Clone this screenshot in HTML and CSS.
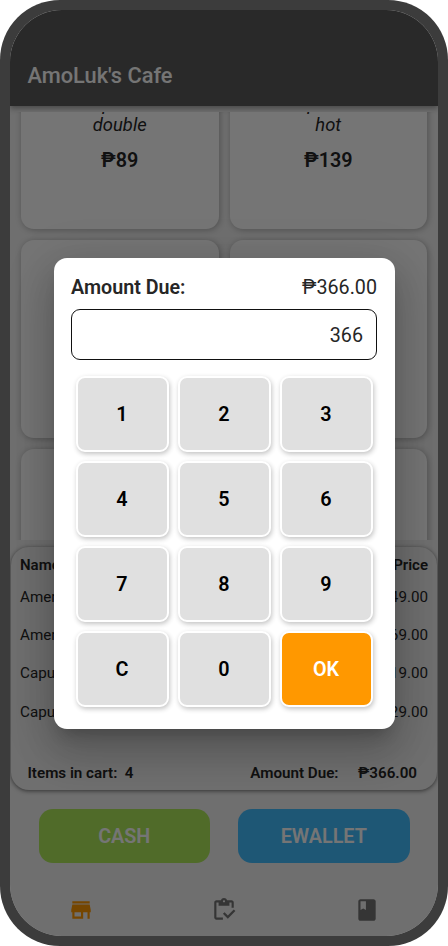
FILE: index.html
```html
<!DOCTYPE html>
<html lang="en">
<head>
<meta charset="utf-8">
<title>AmoLuk's Cafe</title>
<link rel="stylesheet" href="styles.css">
</head>
<body>
<div class="phone">
  <div class="screen">
    <header class="appbar"><h1>AmoLuk's Cafe</h1></header>
    <main class="products">
      <article class="product"><p class="name">Espresso<br>double</p><p class="price">₱89</p></article>
      <article class="product"><p class="name">Capuccino<br>hot</p><p class="price">₱139</p></article>
      <article class="product"></article>
      <article class="product"></article>
      <article class="product"></article>
      <article class="product"></article>
    </main>
    <section class="cart">
      <div class="row head"><span>Name</span><span>Price</span></div>
      <div class="row"><span>Americano</span><span>₱49.00</span></div>
      <div class="row"><span>Americano</span><span>₱69.00</span></div>
      <div class="row"><span>Capuccino</span><span>₱119.00</span></div>
      <div class="row"><span>Capuccino</span><span>₱129.00</span></div>
      <div class="totals"><span>Items in cart:&nbsp; 4</span><span class="due">Amount Due:</span><span>₱366.00</span></div>
    </section>
    <div class="pay">
      <button class="cash">CASH</button>
      <button class="ewallet">EWALLET</button>
    </div>
    <nav class="nav">
      <svg class="active" viewBox="0 0 24 24"><path d="M20 4H4v2h16V4zm1 10v-2l-1-5H4l-1 5v2h1v6h10v-6h4v6h2v-6h1zm-9 4H6v-4h6v4z"/></svg>
      <svg viewBox="0 0 24 24"><path d="M5 5h2v3h10V5h2v5h2V5c0-1.100-.9-2-2-2h-4.180C14.400 1.840 13.300 1 12 1S9.600 1.840 9.180 3H5c-1.100 0-2 .9-2 2v14c0 1.100.9 2 2 2h6v-2H5V5zm7-2c.55 0 1 .45 1 1s-.45 1-1 1-1-.45-1-1 .45-1 1-1z"/><path d="M21 11.500 15.510 17l-3.010-3L11 15.500l4.510 4.500L22.500 13z"/></svg>
      <svg viewBox="0 0 24 24"><path d="M18 2H6c-1.100 0-2 .9-2 2v16c0 1.100.9 2 2 2h12c1.100 0 2-.9 2-2V4c0-1.100-.9-2-2-2zM6 4h5v8l-2.500-1.500L6 12V4z"/></svg>
    </nav>
    <div class="scrim">
      <div class="dialog">
        <div class="summary"><strong>Amount Due:</strong><span>₱366.00</span></div>
        <div class="field">366</div>
        <div class="keys">
          <button>1</button><button>2</button><button>3</button>
          <button>4</button><button>5</button><button>6</button>
          <button>7</button><button>8</button><button>9</button>
          <button>C</button><button>0</button><button class="ok">OK</button>
        </div>
      </div>
    </div>
  </div>
</div>
</body>
</html>
```

FILE: styles.css
```css
* { box-sizing: border-box; margin: 0; }
body { background: #fff; font-family: Roboto, sans-serif; color: #262626; }
button { font: inherit; border: 0; padding: 0; }

.phone {
  width: 448px;
  height: 946px;
  padding: 10px;
  background: #3c3c3c;
  border-radius: 60px;
}
.screen {
  position: relative;
  height: 926px;
  display: flex;
  flex-direction: column;
  background: #f1f1f1;
  border-radius: 52px;
  overflow: hidden;
}

.appbar {
  flex: none;
  height: 95.500px;
  padding: 53px 17.500px 0;
  background: #5a5a5a;
  color: #fff;
  box-shadow: 0 2px 6px rgba(0, 0, 0, .4);
}
.appbar h1 { font-size: 21.800px; line-height: 26px; font-weight: 500; }

.products {
  flex: none;
  height: 428px;
  margin-top: 6.500px;
  padding: 0 11px;
  display: grid;
  grid-template-columns: 1fr 1fr;
  grid-auto-rows: 198px;
  gap: 11px;
  align-content: start;
  overflow: hidden;
}
.product {
  margin-top: -81px;
  height: 198px;
  background: #fff;
  border-radius: 13px;
  box-shadow: 1px 1px 6px rgba(0, 0, 0, .28);
  text-align: center;
}
.product:nth-child(-n+2) { padding-top: 62px; }
.name { font-size: 18.400px; line-height: 21px; font-style: italic; }
.price { margin-top: 14px; font-size: 19.800px; line-height: 24px; font-weight: 600; }

.cart {
  flex: none;
  height: 243px;
  margin: 7px 1px 0;
  padding: 0 9px;
  background: #f1f1f1;
  border-radius: 18px;
  box-shadow: 0 1px 4px rgba(0, 0, 0, .55);
  font-size: 15.200px;
}
.row { display: flex; justify-content: space-between; height: 38.200px; line-height: 39px; }
.row.head { height: 31px; line-height: 37px; font-weight: 600; font-size: 15px; }
.totals { display: flex; padding: 30px 11px 0 7.500px; line-height: 24px; font-weight: 600; font-size: 15.200px; }
.due { margin: 0 19.500px 0 auto; }

.pay { flex: none; display: flex; gap: 28px; padding: 19px 28.500px 0; }
.pay button { flex: 1; height: 54px; border-radius: 14px; color: #fff; font-size: 19.800px; font-weight: 600; }
.cash { background: #aee95b; }
.ewallet { background: #43bdff; }

.nav { flex: 1; display: flex; align-items: center; margin-top: 21px; }
.nav svg { width: 26px; height: 26px; flex: none; margin: 0 58.330px; fill: #737373; }
.nav .active { fill: #ff9800; }

.scrim {
  position: absolute;
  inset: 0;
  background: rgba(0, 0, 0, .54);
  display: flex;
  justify-content: center;
  align-items: flex-start;
  padding-top: 248px;
}
.dialog {
  width: 341px;
  height: 471px;
  padding: 18px 17.500px;
  background: #fff;
  border-radius: 13px;
  box-shadow: 0 11px 15px -7px rgba(0, 0, 0, .2), 0 24px 38px 3px rgba(0, 0, 0, .14), 0 9px 46px 8px rgba(0, 0, 0, .12);
}
.summary { display: flex; justify-content: space-between; font-size: 19.700px; line-height: 24px; }
.summary strong { font-weight: 600; }
.field {
  height: 51px;
  margin-top: 9px;
  padding-right: 13px;
  border: 1px solid #111;
  border-radius: 9px;
  font-size: 19.700px;
  line-height: 52px;
  text-align: right;
}
.keys { display: grid; grid-template-columns: repeat(3, 93px); gap: 9px; margin: 16px 0 0 4.500px; }
.keys button {
  height: 76px;
  background: #e0e0e0;
  border: 2px solid #fff;
  border-radius: 9px;
  box-shadow: 1px 2px 5px rgba(0, 0, 0, .24);
  font-size: 19.800px;
  font-weight: 600;
  color: #000;
}
.keys .ok { background: #ff9800; color: #fff; }
```
